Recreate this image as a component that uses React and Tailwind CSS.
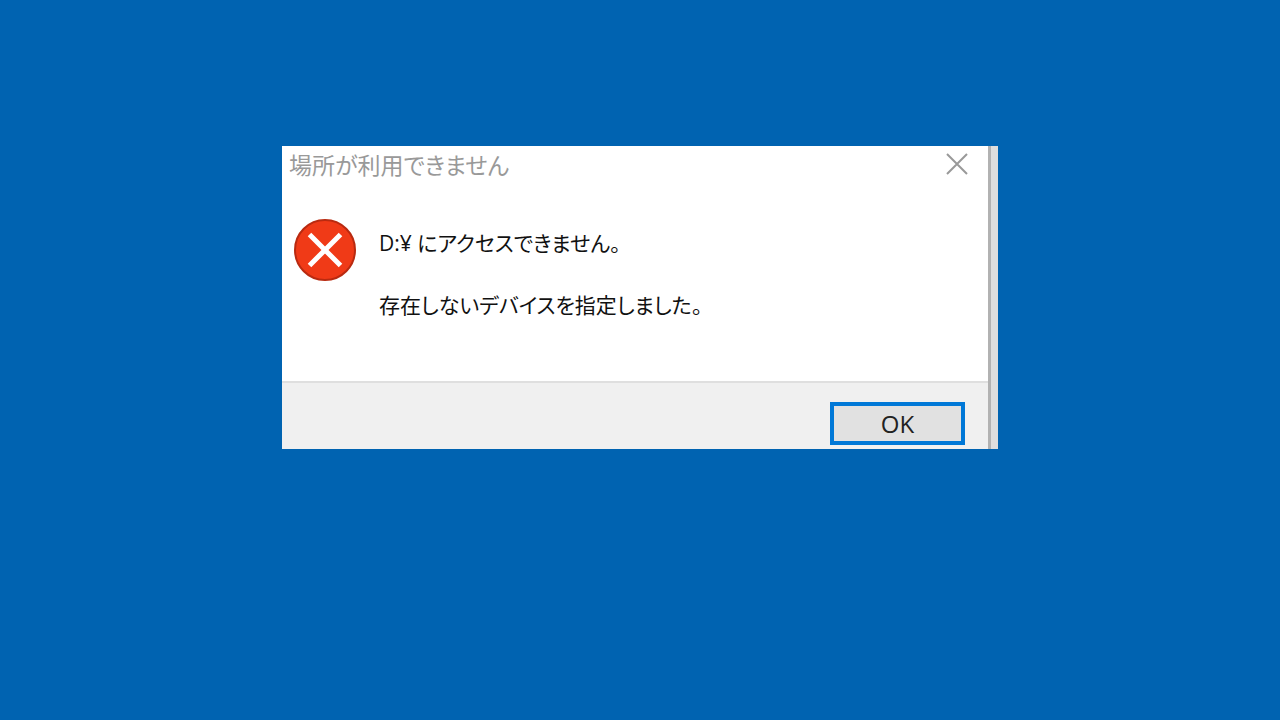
import React from 'react';

const ErrorIcon = () => (
  <svg viewBox="0 0 62 62" className="h-[62px] w-[62px] shrink-0" aria-hidden="true">
    <circle cx="31" cy="31" r="30" fill="#f03a17" stroke="#b92a10" strokeWidth="2" />
    <path d="M15.500 15.500 46.500 46.500M46.500 15.500 15.500 46.500" stroke="#fff" strokeWidth="5" fill="none" />
  </svg>
);

const CloseIcon = () => (
  <svg viewBox="0 0 22 22" className="h-[22px] w-[22px]" aria-hidden="true">
    <path d="M1 1 21 21M21 1 1 21" stroke="#999" strokeWidth="2" fill="none" />
  </svg>
);

const Dialog = ({ title, children }) => (
  <div
    role="alertdialog"
    aria-labelledby="dialog-title"
    aria-describedby="dialog-message"
    className="flex w-full max-w-[716px] bg-[#dedede]"
  >
    <div className="flex-1 bg-white">
      <header className="flex h-10 items-start justify-between pt-[7px] pr-5 pl-[7px]">
        <h1 id="dialog-title" className="text-[23px] leading-6 text-[#999]">{title}</h1>
        <button type="button" aria-label="閉じる">
          <CloseIcon />
        </button>
      </header>

      <div className="flex min-h-[195px] gap-[23px] px-3 pt-[33px]">
        <ErrorIcon />
        <div id="dialog-message" className="space-y-[30px] pt-2 text-[21px] leading-8 text-[#111]">
          {children}
        </div>
      </div>

      <footer className="flex justify-end border-t-2 border-[#dfdfdf] bg-[#f0f0f0] pt-[19px] pr-[23px] pb-1">
        <button
          type="button"
          className="h-[43px] w-[135px] border-4 border-[#0078d7] bg-[#e1e1e1] text-2xl text-[#222]"
        >
          OK
        </button>
      </footer>
    </div>
    <div className="w-[10px] border-l-3 border-[#b2b2b2]" />
  </div>
);

export default function App() {
  return (
    <main className="flex min-h-screen items-start justify-center bg-[#0063b1] pt-[146px] font-['Open_Sans','Noto_Sans_CJK_JP',sans-serif] [font-feature-settings:'palt']">
      <Dialog title="場所が利用できません">
        <p>D:¥ にアクセスできません。</p>
        <p>存在しないデバイスを指定しました。</p>
      </Dialog>
    </main>
  );
}
